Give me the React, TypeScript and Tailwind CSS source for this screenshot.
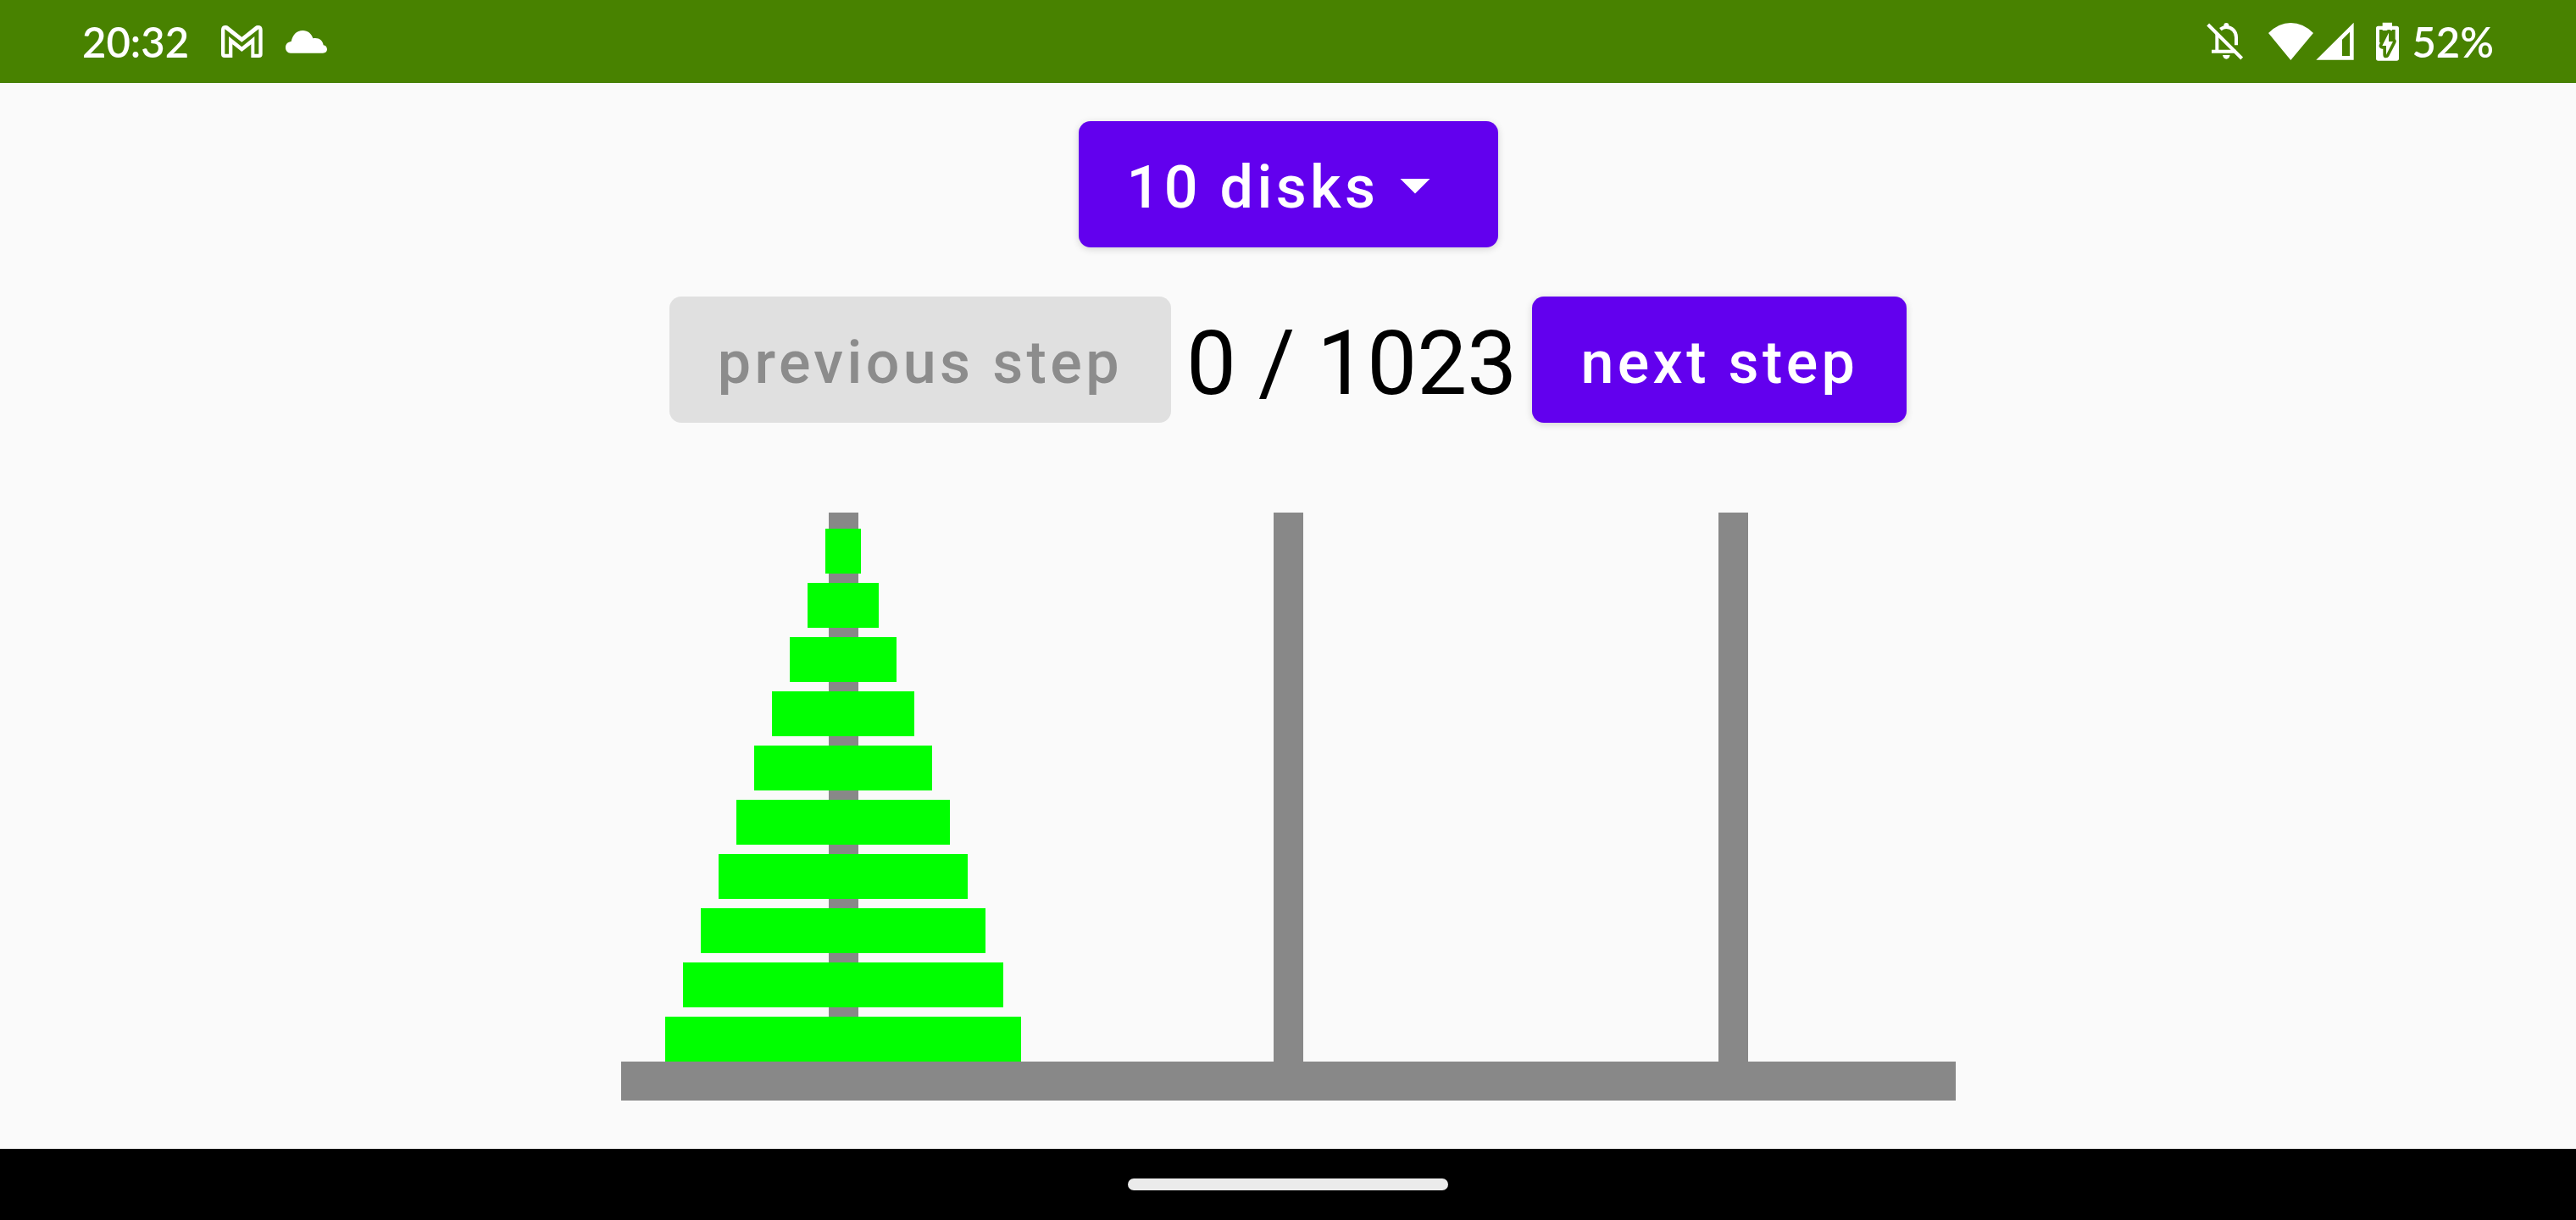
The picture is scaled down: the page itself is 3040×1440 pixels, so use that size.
import { useState } from "react";

const DISK_CHOICES = [1, 2, 3, 4, 5, 6, 7, 8, 9, 10];

/** Returns, for each of the three pegs, its disks from top to bottom after `step` moves. */
function pegsAt(count: number, step: number): number[][] {
  const pegs: number[][] = [[], [], []];
  let [from, to, via] = [0, 2, 1];
  let rest = step;
  for (let disk = count; disk > 0; disk--) {
    const half = 2 ** (disk - 1);
    if (rest < half) {
      pegs[from].unshift(disk);
      [to, via] = [via, to];
    } else {
      pegs[to].unshift(disk);
      rest -= half;
      [from, via] = [via, from];
    }
  }
  return pegs;
}

function GmailIcon() {
  return (
    <svg viewBox="534 88 159 126" className="h-[42px] w-[53px]" fill="white" fillRule="evenodd" aria-label="Gmail">
      <path d="M540 110Q540 94 556 94Q562 94 566 98L613 135L660 98Q664 94 670 94Q686 94 686 110V196Q686 208 674 208H646V161L613 187L580 161V208H552Q540 208 540 196ZM553 107V195H567V133L613 170L658 133V195H673V107L613 153Z" />
    </svg>
  );
}

function CloudIcon() {
  return (
    <svg viewBox="768 102 153 90" className="h-[30px] w-[51px]" fill="white" aria-label="Cloud">
      <path d="M789 188C778 188 771 180 771 168C771 156 780 148 791 147C796 124 810 108 832 108C850 108 863 119 868 136C888 132 903 143 905 160C913 161 918 167 918 175C918 183 912 188 903 188Z" />
    </svg>
  );
}

function BellOffIcon() {
  return (
    <svg viewBox="72 86 132 138" className="h-[46px] w-[44px]" fill="none" stroke="white" strokeWidth="12" aria-label="Notifications muted">
      <path d="M109 127V190M90 190H176" />
      <path d="M121 112Q131 104 142 104C162 104 177 120 177 140V168" />
      <path d="M77 95L197 215" />
      <path d="M133 106V98A9 9 0 0 1 151 98V106ZM129 203H155Q152 217 142 217Q132 217 129 203Z" fill="white" stroke="none" />
    </svg>
  );
}

function WifiIcon() {
  return (
    <svg viewBox="291 82 165 138" className="h-[46px] w-[55px]" fill="white" aria-label="Wi-Fi">
      <path d="M294 121Q330 85 373 85Q417 85 453 121L373 217Z" />
    </svg>
  );
}

function SignalIcon() {
  return (
    <svg viewBox="465 84 138 138" className="h-[46px] w-[46px]" fill="white" fillRule="evenodd" aria-label="Mobile signal">
      <path d="M466 218L599 86V218ZM558 146V204H585V119Z" />
    </svg>
  );
}

function BatteryIcon() {
  return (
    <svg viewBox="672 84 87 138" className="h-[46px] w-[29px]" aria-label="Battery charging">
      <path d="M698 86H732V98H748Q756 98 756 106V213Q756 221 748 221H683Q675 221 675 213V106Q675 98 683 98H698Z" fill="white" />
      <path d="M687 111H698V114H732V111H743V157H687Z" fill="#488200" />
      <path d="M720 122L697 168H711V200L735 153H720Z" fill="#488200" stroke="#488200" strokeWidth="22" strokeLinejoin="round" />
      <path d="M720 122L697 168H711V200L735 153H720Z" fill="white" />
    </svg>
  );
}

function StatusBar() {
  return (
    <header className="flex h-[98px] items-center justify-between bg-[#488200] px-[97px] font-['Lato',sans-serif] text-[49px] font-semibold text-white">
      <div className="flex items-center">
        <time className="leading-none">20:32</time>
        <div className="ml-9 flex items-center gap-6">
          <GmailIcon />
          <CloudIcon />
        </div>
      </div>
      <div className="flex items-center">
        <BellOffIcon />
        <div className="ml-7 flex items-center gap-0.5">
          <WifiIcon />
          <SignalIcon />
        </div>
        <div className="ml-6 flex items-center gap-3.5">
          <BatteryIcon />
          <span className="leading-none">52%</span>
        </div>
      </div>
    </header>
  );
}

function StepButton({ label, disabled, onClick }: { label: string; disabled: boolean; onClick: () => void }) {
  return (
    <button
      type="button"
      disabled={disabled}
      onClick={onClick}
      className="h-[149px] rounded-[14px] bg-[#6200ee] px-[57px] pt-[7px] text-[70px] font-medium tracking-[0.0625em] text-white shadow-[0_2px_8px_rgba(0,0,0,0.16)] disabled:bg-[#e0e0e0] disabled:text-[#8c8c8c] disabled:shadow-none"
    >
      {label}
    </button>
  );
}

function Peg({ disks }: { disks: number[] }) {
  return (
    <div className="grid h-[648px] justify-items-center">
      <div className="col-start-1 row-start-1 w-[35px] bg-[#888888]" />
      <div className="col-start-1 row-start-1 flex w-full flex-col items-center justify-end gap-[11px]">
        {disks.map((disk) => (
          <div key={disk} className="h-[53px] bg-[#00ff00]" style={{ width: `${disk * 8}%` }} />
        ))}
      </div>
    </div>
  );
}

export default function App() {
  const [count, setCount] = useState(10);
  const [step, setStep] = useState(0);
  const total = 2 ** count - 1;

  return (
    <div className="flex min-h-screen flex-col bg-[#fafafa] font-['Roboto',sans-serif] text-black">
      <StatusBar />
      <main className="flex flex-1 flex-col items-center pt-[45px] pb-[57px]">
        <div className="relative">
          <select
            aria-label="Number of disks"
            value={count}
            onChange={(event) => {
              setCount(Number(event.target.value));
              setStep(0);
            }}
            className="block h-[149px] appearance-none rounded-[14px] bg-[#6200ee] pt-[7px] pr-[140px] pl-[57px] text-[70px] font-medium tracking-[0.0625em] text-white shadow-[0_2px_8px_rgba(0,0,0,0.16)]"
          >
            {DISK_CHOICES.map((choice) => (
              <option key={choice} value={choice}>
                {choice === 1 ? "1 disk" : `${choice} disks`}
              </option>
            ))}
          </select>
          <svg viewBox="0 0 24 24" className="pointer-events-none absolute inset-y-0 right-14 my-auto size-[84px]" fill="white" aria-hidden="true">
            <path d="M7 10l5 5 5-5z" />
          </svg>
        </div>
        <div className="mt-[58px] flex items-center gap-[18px]">
          <StepButton label="previous step" disabled={step === 0} onClick={() => setStep(step - 1)} />
          <output className="pt-2.5 text-[105px] leading-none">
            {step} / {total}
          </output>
          <StepButton label="next step" disabled={step === total} onClick={() => setStep(step + 1)} />
        </div>
        <div className="mt-[106px] w-[1575px] max-w-full">
          <div className="grid grid-cols-3">
            {pegsAt(count, step).map((disks, index) => (
              <Peg key={index} disks={disks} />
            ))}
          </div>
          <div className="h-[46px] bg-[#888888]" />
        </div>
      </main>
      <footer className="flex h-[84px] items-center justify-center bg-black">
        <div className="h-3.5 w-[378px] rounded-full bg-[#ebebeb]" />
      </footer>
    </div>
  );
}
